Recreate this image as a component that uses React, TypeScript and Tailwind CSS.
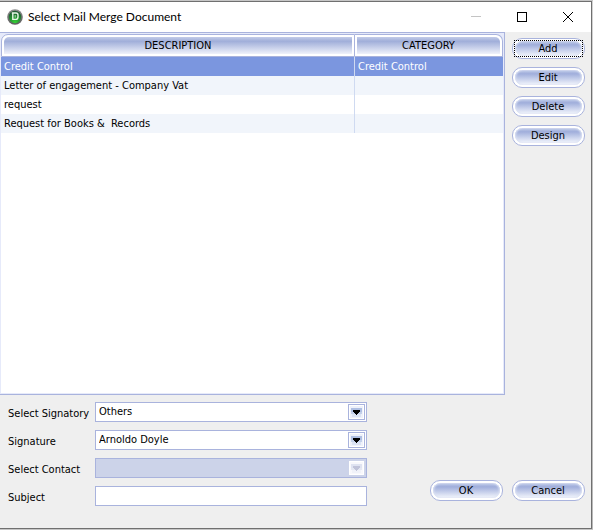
import type { ReactNode } from "react";

const documents = [
  { description: "Credit Control", category: "Credit Control" },
  { description: "Letter of engagement - Company Vat", category: "" },
  { description: "request", category: "" },
  { description: "Request for Books &  Records", category: "" },
];

function AppIcon() {
  return (
    <svg width="16" height="16" viewBox="0 0 16 16" aria-hidden="true">
      <defs>
        <linearGradient id="ring" x1="0" y1="0" x2="0" y2="1">
          <stop offset="0" stopColor="#8d8d8d" />
          <stop offset="1" stopColor="#5c5c5c" />
        </linearGradient>
        <radialGradient id="disc" cx="0.5" cy="0.95" r="0.85">
          <stop offset="0" stopColor="#35d335" />
          <stop offset="0.5" stopColor="#259432" />
          <stop offset="1" stopColor="#1f5c33" />
        </radialGradient>
      </defs>
      <circle cx="8" cy="8" r="7.8" fill="url(#ring)" />
      <circle cx="8" cy="8" r="6.2" fill="url(#disc)" />
      <path
        d="M4.8 4H9Q11 4 11 6V8Q11 10.4 8.8 10.4H5.8V4"
        fill="none"
        stroke="#e8f5e8"
        strokeWidth="1.4"
      />
      <path d="M8.2 6V8.6" stroke="#a9d6ab" strokeWidth="1" />
    </svg>
  );
}

function PillButton({ children, focused = false }: { children: ReactNode; focused?: boolean }) {
  return (
    <button
      type="button"
      className="relative flex h-[21px] w-[73px] items-stretch rounded-[10px] border border-[#a9b3dd] bg-white p-[2px] text-[11px] leading-4"
    >
      <span className="flex-1 rounded-[8px] bg-linear-to-b from-[#c3cce9] via-[#a0aedb] via-25% to-[#f4f6fc] pr-px shadow-[inset_1px_0_2px_#dbe1f3,inset_-1px_0_2px_#dbe1f3]">
        {children}
      </span>
      {focused && <span className="absolute inset-[1px] border border-dotted border-black" />}
    </button>
  );
}

function DropArrow({ disabled = false }: { disabled?: boolean }) {
  return (
    <span
      className={`pointer-events-none absolute top-[2px] right-[2px] flex h-4 w-[17px] items-center justify-center border ${
        disabled ? "border-[#ccd3e9]" : "border-[#a9b3dd]"
      } bg-white`}
    >
      <svg width="15" height="14" viewBox="0 0 15 14" shapeRendering="crispEdges" aria-hidden="true">
        <rect x="1" y="1" width="13" height="12" fill={disabled ? "#f8f8fc" : "#eef1fa"} />
        <rect x="2" y="3" width="11" height="4" fill={disabled ? "#dfe3f1" : "#afbfe2"} />
        <rect x="2" y="7" width="11" height="2" fill={disabled ? "#e5e8f3" : "#c3d0ea"} />
        <rect x="3" y="9" width="9" height="3" fill={disabled ? "#f0f2f9" : "#dbe3f4"} />
        <path d="M4 5H11V7H10V8H9V9H8V10H7V9H6V8H5V7H4Z" fill={disabled ? "#c0c3d9" : "#000"} />
      </svg>
    </span>
  );
}

function SelectField({ id, label, value, disabled }: { id: string; label: string; value: string; disabled?: boolean }) {
  return (
    <div className="flex h-5 items-center">
      <label htmlFor={id} className="w-[87px] shrink-0 pt-[2px]">
        {label}
      </label>
      <div className="relative h-5 flex-1">
        <select
          id={id}
          disabled={disabled}
          defaultValue={value}
          className="block h-5 w-full appearance-none border border-[#a9b3dd] bg-white pr-5 pl-[3px] text-[11px] leading-[18px] text-black opacity-100 disabled:bg-[#ccd3e9]"
        >
          <option value={value}>{value}</option>
        </select>
        <DropArrow disabled={disabled} />
      </div>
    </div>
  );
}

function HeaderCell({ children, edge, corner }: { children: ReactNode; edge: string; corner: string }) {
  return (
    <th className="h-[23px] p-0 font-normal">
      <div className={`h-[23px] border-t border-b border-[#a9b3dd] bg-white p-[2px] ${edge}`}>
        <div className={`h-[17px] bg-linear-to-b from-[#c3cce9] via-[#a0aed9] via-25% to-[#f0f2fa] leading-[17px] ${corner}`}>
          {children}
        </div>
      </div>
    </th>
  );
}

export default function App() {
  return (
    <div className="flex min-h-screen bg-[#c6c6c6] pt-px pb-px font-['Tahoma','DejaVu_Sans_Condensed',sans-serif] text-[11px] leading-[15px] text-black">
      <div className="flex flex-1 flex-col border-t border-r border-b border-[#707070] bg-[#efefef]">
        <header className="flex h-[30px] items-center bg-white pl-[7px]">
          <AppIcon />
          <h1 className="ml-[5px] flex-1 font-['Segoe_UI','Lato',sans-serif] text-[12px] leading-4">
            Select Mail Merge Document
          </h1>
          <button type="button" aria-label="Minimize" disabled className="flex h-7 w-[46px] items-center justify-center">
            <svg width="10" height="10" viewBox="0 0 10 10" shapeRendering="crispEdges">
              <path d="M0 4.5H10" stroke="#c4c4c4" />
            </svg>
          </button>
          <button type="button" aria-label="Maximize" className="flex h-7 w-[46px] items-center justify-center">
            <svg width="10" height="10" viewBox="0 0 10 10" shapeRendering="crispEdges">
              <rect x="0.5" y="0.5" width="9" height="9" fill="none" stroke="#000" />
            </svg>
          </button>
          <button type="button" aria-label="Close" className="flex h-7 w-[46px] items-center justify-center">
            <svg width="10" height="10" viewBox="0 0 10 10">
              <path d="M0 0L10 10M10 0L0 10" stroke="#000" />
            </svg>
          </button>
        </header>

        <div className="flex">
          <div className="h-[363px] flex-1 border-t border-r border-b border-[#a9b3dd] bg-white">
            <div className="h-full border border-[#e6eafa]">
              <table className="w-full table-fixed border-separate border-spacing-0">
                <colgroup>
                  <col />
                  <col className="w-[148px]" />
                </colgroup>
                <thead className="bg-[#e6eafa]">
                  <tr>
                    <HeaderCell edge="rounded-tl-[7px] border-l border-r" corner="rounded-tl-[5px]">
                      DESCRIPTION
                    </HeaderCell>
                    <HeaderCell edge="rounded-tr-[7px] border-r" corner="rounded-tr-[5px]">
                      CATEGORY
                    </HeaderCell>
                  </tr>
                </thead>
                <tbody>
                  {documents.map((row, i) => (
                    <tr
                      key={row.description}
                      className={i === 0 ? "bg-[#7b96df] text-white" : i % 2 === 1 ? "bg-[#f1f5fb]" : "bg-white"}
                    >
                      <td className="h-[19px] border-r border-[#cfdaf1] py-0 pl-[3px] whitespace-pre">{row.description}</td>
                      <td className="h-[19px] py-0 pl-[3px]">{row.category}</td>
                    </tr>
                  ))}
                </tbody>
              </table>
            </div>
          </div>
          <div className="flex flex-col gap-2 pt-[6px] pr-[6px] pl-[7px]">
            <PillButton focused>Add</PillButton>
            <PillButton>Edit</PillButton>
            <PillButton>Delete</PillButton>
            <PillButton>Design</PillButton>
          </div>
        </div>

        <div className="flex flex-1 items-end justify-between pr-[6px]">
          <form className="flex w-[367px] flex-col gap-2 self-start pt-[7px] pl-2">
            <SelectField id="signatory" label="Select Signatory" value="Others" />
            <SelectField id="signature" label="Signature" value="Arnoldo Doyle" />
            <SelectField id="contact" label="Select Contact" value="" disabled />
            <div className="flex h-5 items-center">
              <label htmlFor="subject" className="w-[87px] shrink-0 pt-[2px]">
                Subject
              </label>
              <input id="subject" type="text" className="h-5 min-w-0 flex-1 border border-[#a9b3dd] bg-white px-[3px]" />
            </div>
          </form>
          <div className="flex gap-[9px] pb-[27px]">
            <PillButton>OK</PillButton>
            <PillButton>Cancel</PillButton>
          </div>
        </div>
      </div>
      <div className="w-px bg-linear-to-b from-[#d2d2d2] to-[#b8b8b8]" />
    </div>
  );
}
